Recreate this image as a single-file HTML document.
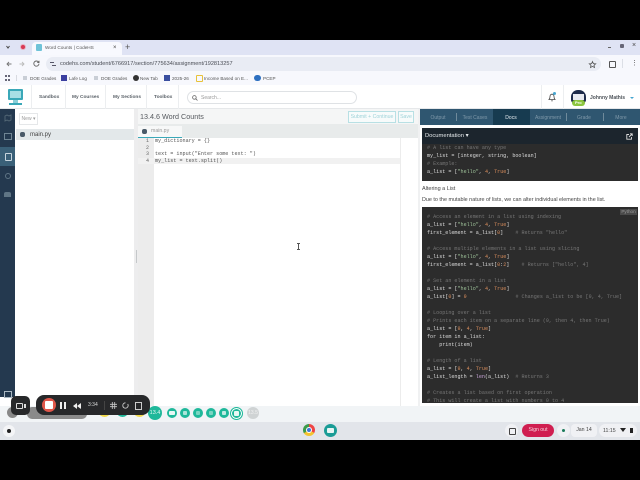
<!DOCTYPE html>
<html><head><meta charset="utf-8">
<style>
html,body{margin:0;padding:0;background:#000;width:640px;height:480px;overflow:hidden}
body{position:relative;font-family:"Liberation Sans",sans-serif}
#w{position:absolute;left:0;top:0;width:640px;height:480px;filter:blur(.35px);background:#000;overflow:hidden}
#w div,#w span{position:absolute;white-space:pre}
.t{font-size:4.6px;color:#555;line-height:8px;top:75px}
.h{font-size:4.8px;font-weight:bold;color:#5a6168;top:94px;line-height:8px}
.v{width:1px;background:#eceef0;top:85px;height:24px}
.tab{font-size:5px;color:#7f98a9;top:114px;line-height:8px;text-align:center;width:36px}
pre{position:absolute;margin:0;font-family:"Liberation Mono",monospace;font-size:5.08px;line-height:8px;color:#dcdcdc}
pre i{font-style:normal}
.c{color:#767676}.s{color:#9fc39a}.n{color:#d98d5c}.p{color:#c7a5d8}
.g{border-radius:50%;background:#1fb89a}
.m{background:#e8f8f5;border-radius:1px}
svg{position:absolute;overflow:visible}
</style></head><body><div id="w">
<div style="left:0;top:40px;width:640px;height:400px;background:#fff"></div>
<!-- tab strip -->
<div style="left:0;top:40px;width:640px;height:15px;background:#dfe3f4"></div>
<div style="left:32px;top:42px;width:90px;height:13px;background:#f8f9fe;border-radius:4px 4px 0 0"></div>
<svg style="left:6px;top:45px" width="4" height="4"><path d="M.5 1L2 3L3.5 1" fill="none" stroke="#444"/></svg>
<div style="left:20px;top:44px;width:6px;height:6px;border-radius:50%;background:#d83a55;border:1px solid #e8b0c0;box-sizing:border-box"></div>
<div style="left:36px;top:44px;width:6px;height:7px;background:#6fc3d8;border-radius:1px"></div>
<div style="left:45px;top:44px;font-size:4.7px;color:#555;line-height:8px">Word Counts | CodeHS</div>
<div style="left:113px;top:44px;font-size:6px;color:#444;line-height:8px">×</div>
<div style="left:125px;top:42px;font-size:9px;color:#555;line-height:11px">+</div>
<div style="left:608px;top:45px;width:3px;height:1px;background:#666;margin-top:2px"></div>
<div style="left:620px;top:44px;width:4px;height:4px;background:#667;border-radius:1px"></div>
<div style="left:632px;top:41px;font-size:7px;color:#444;line-height:10px">×</div>
<!-- toolbar -->
<div style="left:0;top:55px;width:640px;height:17px;background:#f7f8fd"></div>
<svg style="left:6px;top:61px" width="6" height="6"><path d="M5.5 3H1M3 1L1 3L3 5" fill="none" stroke="#777" stroke-width=".9"/></svg>
<svg style="left:19px;top:61px" width="6" height="6"><path d="M.5 3H5M3 1L5 3L3 5" fill="none" stroke="#bbb" stroke-width=".9"/></svg>
<svg style="left:33px;top:60px" width="7" height="7"><path d="M5.6 2.2A2.6 2.6 0 1 0 6 3.7M6 .8V2.6H4.2" fill="none" stroke="#666" stroke-width=".9"/></svg>
<div style="left:46px;top:57px;width:555px;height:14px;background:#e9ecf4;border-radius:7px"></div>
<svg style="left:50px;top:61px" width="6" height="6"><path d="M0 1.5H4M2 4.5H6" stroke="#556" stroke-width="1"/></svg>
<div style="left:60px;top:60px;font-size:5.6px;color:#4a4d55;line-height:8px">codehs.com/student/6766917/section/775634/assignment/192813257</div>
<svg style="left:589px;top:61px" width="7" height="7"><path d="M3.5.5L4.4 2.6L6.7 2.8L5 4.3L5.5 6.5L3.5 5.4L1.5 6.5L2 4.3L.3 2.8L2.6 2.6Z" fill="none" stroke="#555" stroke-width=".8"/></svg>
<div style="left:609px;top:61px;width:5px;height:5px;border:1px solid #555;border-radius:1px"></div>
<div style="left:622px;top:59px;width:1px;height:9px;background:#dcdfe6"></div>
<div style="left:631px;top:59px;font-size:7px;color:#555;line-height:10px">⋮</div>
<!-- bookmarks -->
<div style="left:0;top:72px;width:640px;height:13px;background:#f7f8fd"></div>
<div style="left:5px;top:75px;width:2px;height:2px;background:#667"></div><div style="left:8px;top:75px;width:2px;height:2px;background:#667"></div>
<div style="left:5px;top:79px;width:2px;height:2px;background:#667"></div><div style="left:8px;top:79px;width:2px;height:2px;background:#667"></div>
<div style="left:16px;top:75px;width:1px;height:6px;background:#d8dae0"></div>
<div style="left:23px;top:76px;width:4px;height:4px;background:#c9ced6"></div>
<div class="t" style="left:30px">DOE Grades</div>
<div style="left:61px;top:75px;width:6px;height:6px;background:#3b3fa0"></div>
<div class="t" style="left:69px">Lafe Log</div>
<div style="left:94px;top:76px;width:4px;height:4px;background:#c9ced6"></div>
<div class="t" style="left:101px">DOE Grades</div>
<div style="left:133px;top:75px;width:6px;height:6px;background:#333;border-radius:50%"></div>
<div class="t" style="left:140px">New Tab</div>
<div style="left:164px;top:75px;width:6px;height:6px;background:#3a4fa0"></div>
<div class="t" style="left:172px">2025-26</div>
<div style="left:196px;top:75px;width:5px;height:5px;border:1px solid #e8c23a;border-radius:1px"></div>
<div class="t" style="left:204px">Income Based on E...</div>
<div style="left:254px;top:75px;width:7px;height:6px;background:#2c6fc0;border-radius:3px"></div>
<div class="t" style="left:263px">PCEP</div>
<!-- site header -->
<div style="left:0;top:85px;width:640px;height:24px;background:#fff;border-bottom:1px solid #e6e8ea;box-sizing:border-box"></div>
<div style="left:8px;top:89px;width:15px;height:11px;background:#3aa8b8;border-radius:1px"></div>
<div style="left:10px;top:91px;width:11px;height:7px;background:#a8dfe5"></div>
<div style="left:13px;top:100px;width:5px;height:3px;background:#8ccfd8"></div>
<div style="left:9px;top:103px;width:13px;height:2px;background:#3aa8b8"></div>
<div class="v" style="left:31px"></div><div class="v" style="left:65px"></div><div class="v" style="left:105px"></div><div class="v" style="left:146px"></div><div class="v" style="left:178px"></div>
<div class="h" style="left:39px">Sandbox</div>
<div class="h" style="left:72px">My Courses</div>
<div class="h" style="left:113px">My Sections</div>
<div class="h" style="left:154px">Toolbox</div>
<div style="left:187px;top:91px;width:170px;height:13px;border:1px solid #dfe2e5;border-radius:7px;box-sizing:border-box;background:#fff"></div>
<svg style="left:192px;top:95px" width="6" height="6"><circle cx="2.4" cy="2.4" r="1.8" fill="none" stroke="#666" stroke-width=".8"/><path d="M3.8 3.8L5.5 5.5" stroke="#666" stroke-width=".8"/></svg>
<div style="left:201px;top:94px;font-size:5px;color:#999;line-height:8px">Search...</div>
<div class="v" style="left:541px"></div><div class="v" style="left:563px"></div>
<svg style="left:548px;top:93px" width="8" height="9"><path d="M1 6.5C2 5.5 2 4.5 2 3.5C2 2 3 1.2 4 1.2C5 1.2 6 2 6 3.5C6 4.5 6 5.5 7 6.5ZM3.3 7.8H4.7" fill="none" stroke="#444" stroke-width=".8"/></svg>
<div style="left:553px;top:92px;width:3px;height:3px;border-radius:50%;background:#45a5d0"></div>
<div style="left:571px;top:90px;width:15px;height:13px;border-radius:7px 7px 3px 3px;background:#1e2b4a"></div>
<div style="left:573px;top:94px;width:11px;height:6px;background:#e8eaf0"></div>
<div style="left:572px;top:100px;width:13px;height:6px;border-radius:3px;background:#8cc63f"></div>
<div style="left:575px;top:100px;font-size:4px;color:#fff;font-weight:bold;line-height:6px">Pro</div>
<div style="left:590px;top:94px;font-size:5px;font-weight:bold;color:#4c5258;line-height:8px">Johnny Mathis</div>
<div style="left:630px;top:97px;width:0;height:0;border:2px solid transparent;border-top:2px solid #45a5d0"></div>
<!-- left sidebar -->
<div style="left:0;top:109px;width:15px;height:288px;background:#24394f"></div>
<div style="left:0;top:147px;width:15px;height:19px;background:#3a6078"></div>
<svg style="left:4px;top:114px" width="8" height="8"><path d="M1 2L3 1L5 2L7 1V6L5 7L3 6L1 7Z" fill="none" stroke="#566a78" stroke-width=".9"/></svg>
<div style="left:4px;top:133px;width:6px;height:5px;border:1px solid #6f8594"></div>
<div style="left:5px;top:153px;width:5px;height:6px;border:1px solid #c7d5de;border-radius:1px"></div>
<div style="left:5px;top:173px;width:4px;height:4px;border:1px solid #5f7585;border-radius:50%"></div>
<div style="left:4px;top:192px;width:7px;height:5px;background:#5f7585;border-radius:2px 2px 0 0"></div>
<div style="left:4px;top:391px;width:6px;height:5px;border:1px solid #aab8c2"></div>
<!-- file panel -->
<div style="left:19px;top:113px;width:19px;height:12px;border:1px solid #e5e7e9;box-sizing:border-box;font-size:5px;color:#999;line-height:10px;text-align:center">New ▾</div>
<div style="left:16px;top:129px;width:119px;height:11px;background:#e3e8ea"></div>
<div style="left:20px;top:132px;width:5px;height:5px;background:#4a5a68;border-radius:2px"></div>
<div style="left:30px;top:131px;font-size:6px;color:#444;line-height:9px">main.py</div>
<div style="left:134px;top:109px;width:4px;height:297px;background:#ededee"></div>
<div style="left:136px;top:250px;width:1px;height:13px;background:#c5c8ca"></div>
<!-- editor -->
<div style="left:138px;top:109px;width:282px;height:15px;background:#f5f6f6"></div>
<div style="left:140px;top:111px;font-size:7.2px;color:#55595e;line-height:12px">13.4.6 Word Counts</div>
<div style="left:348px;top:111px;width:48px;height:12px;border:1px solid #b8e0e4;box-sizing:border-box;font-size:5.2px;color:#9fd3d9;line-height:10px;text-align:center;background:#f7fbfb">Submit + Continue</div>
<div style="left:398px;top:111px;width:16px;height:12px;border:1px solid #b8e0e4;box-sizing:border-box;font-size:5.2px;color:#9fd3d9;line-height:10px;text-align:center;background:#f7fbfb">Save</div>
<div style="left:138px;top:124px;width:282px;height:14px;background:#e8ebeb"></div>
<div style="left:138px;top:126px;width:44px;height:12px;background:#f7f8f8;border-bottom:1px solid #3aa8b8;box-sizing:border-box"></div>
<div style="left:142px;top:129px;width:5px;height:5px;background:#4a5a68;border-radius:2px"></div>
<div style="left:151px;top:127px;font-size:5.2px;color:#999;line-height:9px">main.py</div>
<div style="left:138px;top:138px;width:16px;height:268px;background:#ececec"></div>
<div style="left:138px;top:158px;width:262px;height:6px;background:#f1f1f1"></div>
<div style="left:400px;top:138px;width:1px;height:268px;background:#ececec"></div>
<pre style="left:146px;top:138px;line-height:6.5px;color:#666;font-size:5px">1
2
3
4</pre>
<pre style="left:155px;top:138px;line-height:6.5px;color:#555;font-size:5.1px">my_dictionary = {}

text = input("Enter some text: ")
my_list = text.split()</pre>
<div style="left:297px;top:243px;width:3px;height:7px;border:solid #555;border-width:1px 0;box-sizing:border-box"></div>
<div style="left:298px;top:244px;width:1px;height:6px;background:#555"></div>
<div style="left:418px;top:109px;width:2px;height:297px;background:#f0f1f2"></div>
<!-- right tabs -->
<div style="left:420px;top:109px;width:220px;height:16px;background:#2f5670"></div>
<div style="left:493px;top:109px;width:37px;height:16px;background:#173b50"></div>
<div class="tab" style="left:420px">Output</div>
<div class="tab" style="left:457px">Test Cases</div>
<div class="tab" style="left:493px;color:#e6edf1">Docs</div>
<div class="tab" style="left:530px">Assignment</div>
<div class="tab" style="left:566px">Grade</div>
<div class="tab" style="left:603px">More</div>
<div style="left:456px;top:113px;width:1px;height:8px;background:#6f8a9b"></div>
<div style="left:566px;top:113px;width:1px;height:8px;background:#6f8a9b"></div>
<div style="left:603px;top:113px;width:1px;height:8px;background:#6f8a9b"></div>
<!-- docs -->
<div style="left:422px;top:128px;width:216px;height:16px;background:#1c252d"></div>
<div style="left:425px;top:132px;font-size:5.8px;color:#e4e8ea;line-height:8px">Documentation ▾</div>
<svg style="left:626px;top:133px" width="7" height="7"><path d="M3 1.5H.8V6.2H5.5V4M3 4L6.2.8M4 .8H6.2V3" fill="none" stroke="#ddd" stroke-width=".9"/></svg>
<div style="left:422px;top:144px;width:216px;height:37px;background:#2c2c2c"></div>
<pre style="left:427px;top:144px"><i class="c"># A list can have any type</i>
my_list = [integer, string, boolean]
<i class="c"># Example:</i>
a_list = [<i class="s">"hello"</i>, <i class="n">4</i>, <i class="n">True</i>]</pre>
<div style="left:422px;top:185px;font-size:5.5px;color:#444;line-height:8px">Altering a List</div>
<div style="left:422px;top:196px;font-size:5.42px;color:#444;line-height:8px">Due to the mutable nature of lists, we can alter individual elements in the list.</div>
<div style="left:422px;top:207px;width:216px;height:196px;background:#2c2c2c"></div>
<div style="left:620px;top:209px;width:17px;height:6px;background:#4a4a4a;font-size:4.6px;color:#999;line-height:6px;text-align:center">Python</div>
<pre style="left:427px;top:212.5px"><i class="c"># Access an element in a list using indexing</i>
a_list = [<i class="s">"hello"</i>, <i class="n">4</i>, <i class="n">True</i>]
first_element = a_list[<i class="n">0</i>]    <i class="c"># Returns "hello"</i>

<i class="c"># Access multiple elements in a list using slicing</i>
a_list = [<i class="s">"hello"</i>, <i class="n">4</i>, <i class="n">True</i>]
first_element = a_list[<i class="n">0</i>:<i class="n">2</i>]    <i class="c"># Returns ["hello", 4]</i>

<i class="c"># Set an element in a list</i>
a_list = [<i class="s">"hello"</i>, <i class="n">4</i>, <i class="n">True</i>]
a_list[<i class="n">0</i>] = <i class="n">9</i>                <i class="c"># Changes a_list to be [9, 4, True]</i>

<i class="c"># Looping over a list</i>
<i class="c"># Prints each item on a separate line (9, then 4, then True)</i>
a_list = [<i class="n">9</i>, <i class="n">4</i>, <i class="n">True</i>]
for item in a_list:
    print(item)

<i class="c"># Length of a list</i>
a_list = [<i class="n">9</i>, <i class="n">4</i>, <i class="n">True</i>]
a_list_length = <i class="p">len</i>(a_list)  <i class="c"># Returns 3</i>

<i class="c"># Creates a list based on first operation</i>
<i class="c"># This will create a list with numbers 0 to 4</i></pre>
<div style="left:420px;top:403px;width:220px;height:3px;background:#fff"></div>
<!-- bottom strip -->
<div style="left:0;top:406px;width:640px;height:18px;background:#f1f4f6"></div>
<div style="left:7px;top:407px;width:11px;height:11px;border-radius:50%;background:#888"></div>
<div style="left:27px;top:407px;width:60px;height:12px;border-radius:5px;background:#8a8a8a"></div>
<div style="left:99px;top:408px;width:11px;height:9px;border-radius:50%;background:#f0d84a"></div>
<div style="left:117px;top:408px;width:11px;height:9px;border-radius:50%;background:#1fb89a"></div>
<div style="left:134px;top:408px;width:11px;height:9px;border-radius:50%;background:#f0d84a"></div>
<div class="g" style="left:148px;top:406px;width:14px;height:14px;color:#e8f8f5;font-size:5.5px;line-height:14px;text-align:center">13.4</div>
<div class="g" style="left:167px;top:408px;width:10px;height:10px"></div><div class="m" style="left:169px;top:411px;width:6px;height:4px"></div>
<div class="g" style="left:180px;top:408px;width:10px;height:10px"></div><div class="m" style="left:183px;top:411px;width:4px;height:4px;opacity:.7"></div>
<div class="g" style="left:193px;top:408px;width:10px;height:10px"></div><div class="m" style="left:196px;top:411px;width:4px;height:4px;opacity:.45"></div>
<div class="g" style="left:206px;top:408px;width:10px;height:10px"></div><div class="m" style="left:209px;top:411px;width:4px;height:4px;opacity:.45"></div>
<div class="g" style="left:219px;top:408px;width:10px;height:10px"></div><div class="m" style="left:222px;top:411px;width:4px;height:4px;opacity:.8"></div>
<div style="left:230px;top:407px;width:11px;height:11px;border-radius:50%;background:#1fb89a;border:1px solid #1fb89a;box-shadow:inset 0 0 0 1px #fff"></div><div class="m" style="left:234px;top:411px;width:5px;height:5px"></div>
<div style="left:247px;top:407px;width:12px;height:12px;border-radius:50%;background:#cfd3d4;color:#f2f2f2;font-size:5px;line-height:12px;text-align:center">13.5</div>
<!-- recorder -->
<div style="left:11px;top:396px;width:19px;height:19px;border-radius:5px;background:#27282a"></div>
<div style="left:16px;top:403px;width:7px;height:6px;border:1px solid #ddd;box-sizing:border-box;border-radius:1px"></div>
<div style="left:24px;top:404px;width:2px;height:4px;background:#ddd"></div>
<div style="left:36px;top:395px;width:114px;height:20px;border-radius:8px;background:#27282a"></div>
<div style="left:42px;top:398px;width:14px;height:14px;border-radius:50%;background:#e0564a"></div>
<div style="left:45px;top:401px;width:8px;height:8px;background:#fff;border-radius:1px"></div>
<div style="left:60px;top:402px;width:2px;height:7px;background:#eee"></div>
<div style="left:64px;top:402px;width:2px;height:7px;background:#eee"></div>
<div style="left:73px;top:403px;width:0;height:0;border:3px solid transparent;border-right:4px solid #eee;border-left:0"></div>
<div style="left:77px;top:403px;width:0;height:0;border:3px solid transparent;border-right:4px solid #eee;border-left:0"></div>
<div style="left:88px;top:401px;font-size:5px;color:#ddd;line-height:8px">3:34</div>
<div style="left:104px;top:401px;width:1px;height:9px;background:#444"></div>
<svg style="left:110px;top:402px" width="7" height="7"><path d="M2.3 0V7M4.7 0V7M0 2.3H7M0 4.7H7" stroke="#ccc" stroke-width=".8"/></svg>
<svg style="left:122px;top:402px" width="7" height="7"><path d="M5.7 2A2.7 2.7 0 1 1 3.5 .8" fill="none" stroke="#ccc" stroke-width=".9"/></svg>
<div style="left:135px;top:402px;width:5px;height:6px;border:1px solid #ccc"></div>
<!-- shelf -->
<div style="left:0;top:422px;width:640px;height:18px;background:#e2e5ea"></div>
<div style="left:3px;top:425px;width:12px;height:12px;border-radius:50%;background:#f4f5f7"></div>
<div style="left:7px;top:429px;width:4px;height:4px;border-radius:50%;background:#222"></div>
<div style="left:303px;top:424px;width:12px;height:12px;border-radius:50%;background:conic-gradient(#e44 0 33%,#f4c430 33% 66%,#3a9a4a 66%)"></div>
<div style="left:306px;top:427px;width:6px;height:6px;border-radius:50%;background:#3c78d8;border:1px solid #fff;box-sizing:border-box"></div>
<div style="left:324px;top:424px;width:13px;height:13px;border-radius:50%;background:#1a9c96"></div>
<div style="left:327px;top:428px;width:7px;height:5px;background:#e8f5f3;border-radius:1px"></div>
<div style="left:505px;top:424px;width:13px;height:13px;border-radius:50%;background:#f0f1f4"></div>
<div style="left:509px;top:428px;width:5px;height:5px;border:1px solid #444;border-radius:1px"></div>
<div style="left:522px;top:424px;width:32px;height:13px;border-radius:7px;background:#d01e50;color:#f6d5de;font-size:5.2px;line-height:13px;text-align:center">Sign out</div>
<div style="left:557px;top:424px;width:13px;height:13px;border-radius:7px;background:#f0f1f4"></div>
<div style="left:562px;top:429px;width:3px;height:3px;border-radius:50%;background:#1a7a5a"></div>
<div style="left:571px;top:424px;width:26px;height:13px;border-radius:4px;background:#f0f1f4;color:#444;font-size:5.2px;line-height:13px;text-align:center">Jan 14</div>
<div style="left:599px;top:424px;width:38px;height:13px;border-radius:7px;background:#f0f1f4"></div>
<div style="left:603px;top:427px;font-size:5.2px;color:#444;line-height:8px">11:15</div>
<div style="left:620px;top:428px;width:0;height:0;border:3px solid transparent;border-top:4px solid #222"></div>
<div style="left:630px;top:428px;width:3px;height:5px;background:#222"></div>
</div></body></html>
